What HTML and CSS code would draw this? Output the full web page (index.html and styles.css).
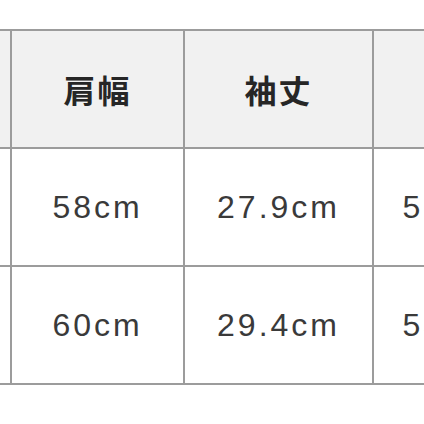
FILE: index.html
```html
<!DOCTYPE html>
<html lang="ja">
<head>
<meta charset="utf-8">
<link rel="stylesheet" href="styles.css">
</head>
<body>
<div class="viewport">
  <div class="size-table">
    <div class="cell head"></div>
    <div class="cell head">肩幅</div>
    <div class="cell head">袖丈</div>
    <div class="cell head">着丈</div>

    <div class="cell"></div>
    <div class="cell">58cm</div>
    <div class="cell">27.9cm</div>
    <div class="cell">51.5cm</div>

    <div class="cell"></div>
    <div class="cell">60cm</div>
    <div class="cell">29.4cm</div>
    <div class="cell">53.5cm</div>
  </div>
</div>
</body>
</html>
```

FILE: styles.css
```css
html, body {
  margin: 0;
  padding: 0;
  background: #ffffff;
}

.viewport {
  width: 424px;
  height: 424px;
  overflow: hidden;
  padding-top: 29px;
  box-sizing: border-box;
}

.size-table {
  display: grid;
  grid-template-columns: 100px 171px 187px 180px;
  grid-auto-rows: 116px;
  gap: 2px;
  padding: 2px 0;
  background: #9c9c9c;
  margin-left: -90px;
  width: max-content;
}

.cell {
  background: #ffffff;
  display: flex;
  align-items: center;
  justify-content: center;
  font-family: "Liberation Sans", Arial, sans-serif;
  font-size: 32px;
  letter-spacing: 3px;
  color: #3a3a3a;
  white-space: nowrap;
}

.head {
  background: #f1f1f1;
  font-family: "Noto Sans CJK JP", "Noto Sans", sans-serif;
  font-weight: 700;
  font-size: 32px;
  letter-spacing: 2px;
  color: #262626;
}
```
